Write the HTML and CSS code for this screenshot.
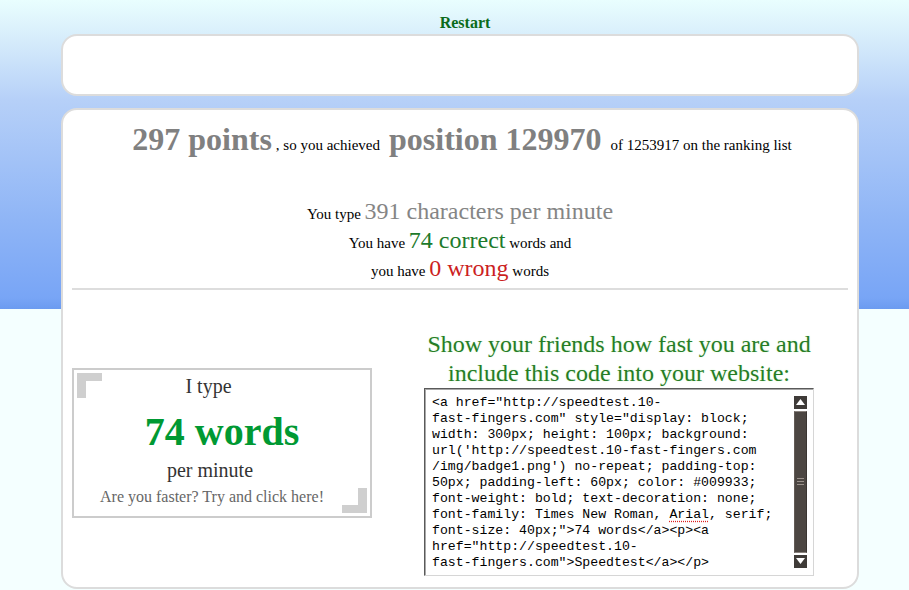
FILE: index.html
```html
<!DOCTYPE html>
<html>
<head>
<meta charset="utf-8">
<title>Speedtest result</title>
<link rel="stylesheet" href="styles.css">
</head>
<body>
<div class="page">
  <div class="restart"><a href="#">Restart</a></div>
  <div class="box box-top"></div>
  <div class="box box-main">
    <div class="points">
      <span class="big">297 points</span> <span class="small">, so you achieved</span>
      <span class="big big-pos">position 129970</span> <span class="small">of 1253917 on the ranking list</span>
    </div>
    <div class="stats">
      <div class="stat">You type <span class="num gray">391 characters per minute</span></div>
      <div class="stat">You have <span class="num green">74 correct</span> words and</div>
      <div class="stat">you have <span class="num red">0 wrong</span> words</div>
    </div>
    <div class="rule"></div>
    <div class="lower">
      <div class="badge">
        <span class="corner corner-tl"></span>
        <span class="corner corner-br"></span>
        <div class="b-itype">I type</div>
        <div class="b-words">74 words</div>
        <div class="b-per">per minute</div>
        <div class="b-faster">Are you faster? Try and click here!</div>
      </div>
      <div class="share">
        <div class="share-title">Show your friends how fast you are and<br>include this code into your website:</div>
        <div class="code">
          <div class="code-text">
            <div class="ln">&lt;a href="http://speedtest.10-</div>
            <div class="ln">fast-fingers.com" style="display: block;</div>
            <div class="ln">width: 300px; height: 100px; background:</div>
            <div class="ln">url('http://speedtest.10-fast-fingers.com</div>
            <div class="ln">/img/badge1.png') no-repeat; padding-top:</div>
            <div class="ln">50px; padding-left: 60px; color: #009933;</div>
            <div class="ln">font-weight: bold; text-decoration: none;</div>
            <div class="ln">font-family: Times New Roman, <span class="spell">Arial</span>, serif;</div>
            <div class="ln">font-size: 40px;"&gt;74 words&lt;/a&gt;&lt;p&gt;&lt;a</div>
            <div class="ln">href="http://speedtest.10-</div>
            <div class="ln">fast-fingers.com"&gt;Speedtest&lt;/a&gt;&lt;/p&gt;</div>
          </div>
          <div class="sbar">
            <div class="sbtn"><svg width="9" height="6" viewBox="0 0 9 6"><polygon points="0,6 9,6 4.5,0" fill="#fff"/></svg></div>
            <div class="strack">
              <div class="grip"><i></i><i></i><i></i></div>
            </div>
            <div class="sbtn"><svg width="9" height="6" viewBox="0 0 9 6"><polygon points="0,0 9,0 4.5,6" fill="#fff"/></svg></div>
          </div>
        </div>
      </div>
    </div>
  </div>
</div>
</body>
</html>
```

FILE: styles.css
```css
html, body {
  margin: 0;
  padding: 0;
}
body {
  font-family: "Liberation Serif", "Times New Roman", serif;
  color: #000;
  height: 590px;
  overflow: hidden;
  background:
    linear-gradient(to bottom, #e9fefe 0px, #d6ecfb 40px, #b6d0f8 100px, #8fb5f6 220px, #78a5f6 298px, #6b9bf0 309px, #f4ffff 309px, #f4ffff 100%);
}
.page {
  width: 798px;
  margin-left: 61px;
  padding-top: 13px;
}
.restart {
  text-align: center;
  padding-left: 10px;
  line-height: 20px;
  height: 21px;
}
.restart a {
  color: #0b6b1a;
  font-weight: bold;
  font-size: 16px;
  text-decoration: none;
}
.box {
  box-sizing: border-box;
  background: #fff;
  border: 2px solid #dcdcdc;
  border-radius: 16px;
}
.box-top {
  height: 62px;
}
.box-main {
  margin-top: 12px;
  height: 481px;
  padding: 9px 9px 0 9px;
}
.points {
  text-align: center;
  line-height: 40px;
  height: 40px;
  white-space: nowrap;
  padding-left: 4px;
}
.points .big {
  font-size: 32px;
  font-weight: bold;
  color: #808080;
}
.points .big-pos {
  margin: 0 5px 0 5px;
}
.points .small {
  font-size: 15px;
}
.stats {
  margin-top: 38px;
  text-align: center;
}
.stat {
  font-size: 15px;
  line-height: 28.5px;
  height: 28.5px;
  white-space: nowrap;
}
.stat .num {
  font-size: 24px;
}
.gray { color: #858585; }
.green { color: #1d7a2b; }
.red { color: #cc1f1f; }
.rule {
  margin-top: 5px;
  height: 2px;
  background: #dddddd;
}
.lower {
  display: flex;
  align-items: flex-start;
  margin-top: 40px;
}
.badge {
  position: relative;
  box-sizing: border-box;
  width: 300px;
  height: 150px;
  margin-top: 38px;
  border: 2px solid #cccccc;
  text-align: center;
  padding-top: 4px;
}
.corner {
  position: absolute;
  width: 25px;
  height: 25px;
  box-sizing: border-box;
  border-color: #cfcfcf;
  border-style: solid;
}
.corner-tl {
  left: 3px;
  top: 3px;
  border-width: 8px 0 0 9px;
}
.corner-br {
  right: 3px;
  bottom: 3px;
  border-width: 0 9px 8px 0;
}
.b-itype {
  font-size: 20px;
  line-height: 24px;
  color: #333;
  padding-right: 27px;
}
.b-words {
  margin-top: 6px;
  font-size: 40px;
  line-height: 56px;
  font-weight: bold;
  color: #009933;
}
.b-per {
  font-size: 20px;
  line-height: 20px;
  color: #333;
  padding-right: 24px;
}
.b-faster {
  margin-top: 7px;
  font-size: 16px;
  line-height: 20px;
  color: #666;
  padding-right: 20px;
  white-space: nowrap;
}
.share {
  margin-left: 52px;
  width: 390px;
}
.share-title {
  text-align: center;
  font-size: 24px;
  line-height: 29px;
  color: #267d26;
  text-shadow: 0 0 2px #d6f5d0;
  white-space: nowrap;
  margin: 0 -10px;
}
.code {
  box-sizing: border-box;
  height: 188px;
  background: #fff;
  border-style: solid;
  border-width: 1px;
  border-color: #5a5a5a #d6d6d6 #d6d6d6 #5a5a5a;
  box-shadow: inset 1px 1px 0 #a8a8a8;
  display: flex;
}
.code-text {
  flex: 1;
  padding: 6px 0 0 7px;
  font-family: "Liberation Mono", "Courier New", monospace;
  font-size: 13.2px;
  line-height: 16px;
  color: #000;
}
.ln {
  white-space: pre;
  height: 16px;
}
.spell {
  text-decoration: underline dotted #d22;
  text-underline-offset: 3px;
}
.sbar {
  width: 13px;
  margin: 7px 6px 7px 0;
  display: flex;
  flex-direction: column;
}
.sbtn {
  height: 13px;
  background: #3f3b38;
  display: flex;
  align-items: center;
  justify-content: center;
}
.strack {
  flex: 1;
  margin: 2px 0;
  background: #4c4642;
  border-left: 1px solid #625b56;
  border-right: 1px solid #3a3532;
  border-top: 1px solid #8a837e;
  border-bottom: 1px solid #8a837e;
  display: flex;
  align-items: center;
  justify-content: center;
}
.grip {
  display: flex;
  flex-direction: column;
  gap: 2px;
}
.grip i {
  display: block;
  width: 7px;
  height: 1px;
  background: #9a918b;
}
```
